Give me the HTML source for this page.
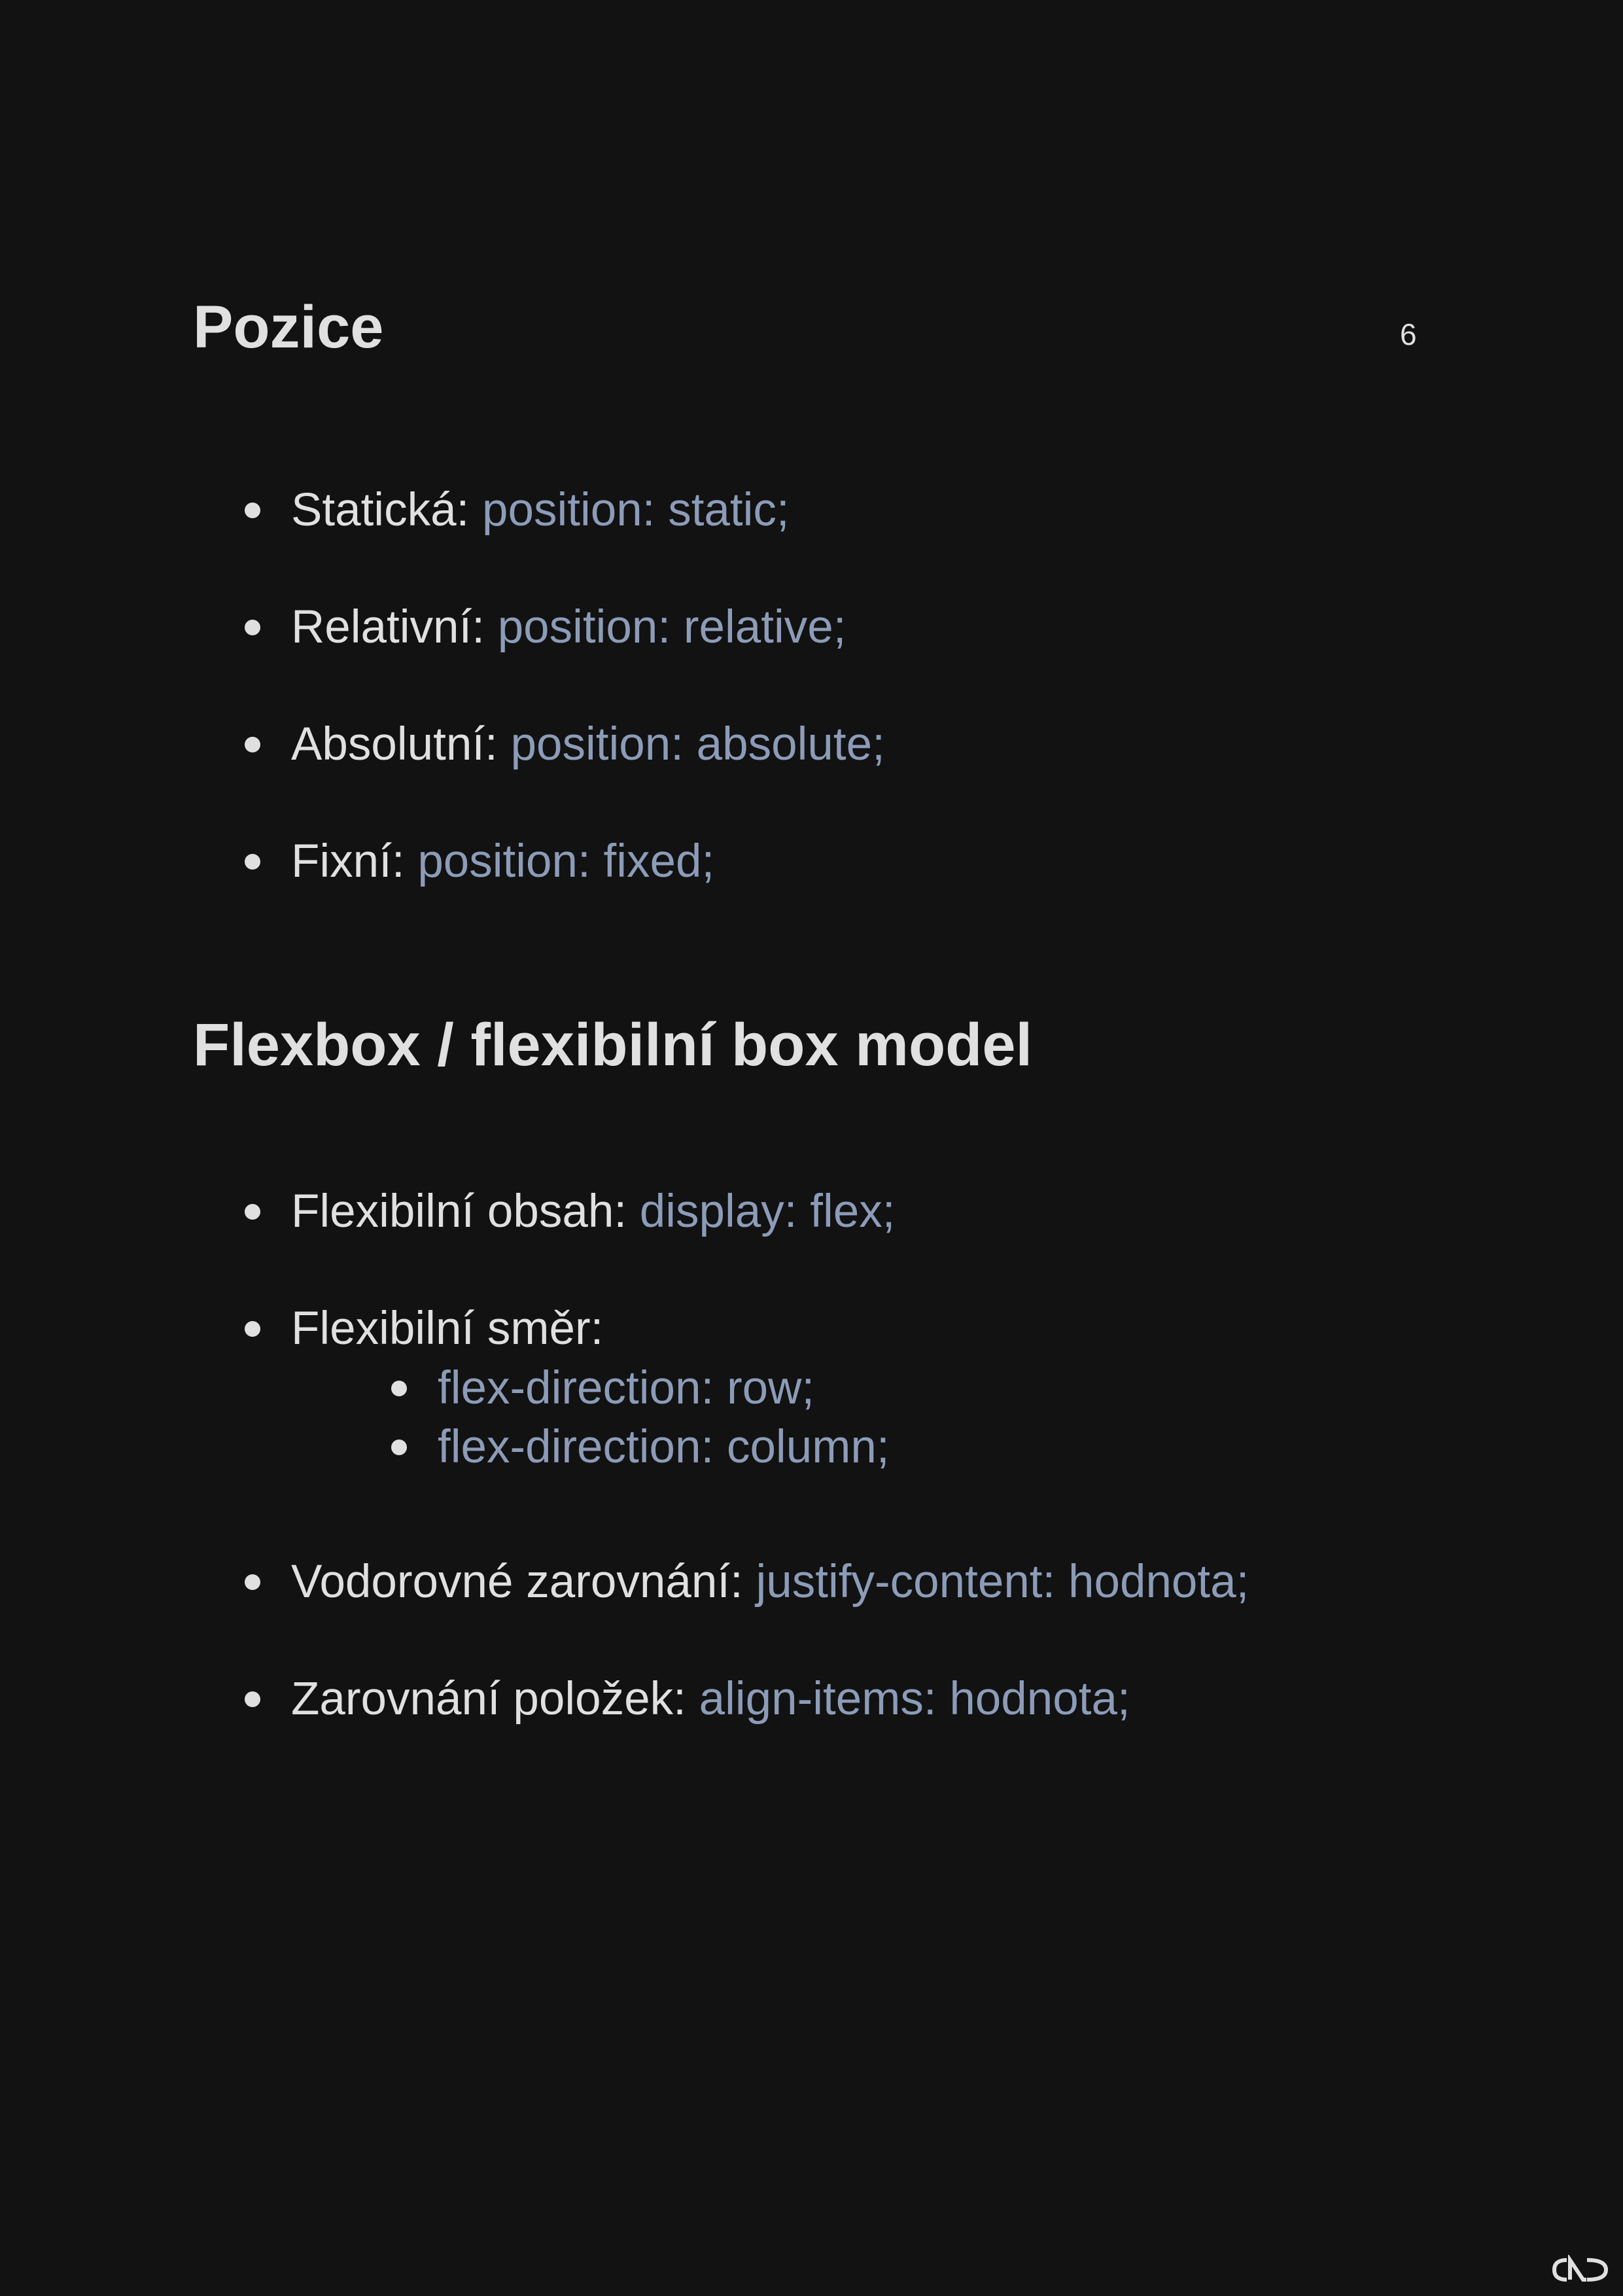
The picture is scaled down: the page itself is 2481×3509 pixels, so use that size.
<!DOCTYPE html>
<html><head><meta charset="utf-8"><style>
html,body{margin:0;padding:0;background:#121212;}
body{width:2481px;height:3509px;position:relative;overflow:hidden;font-family:"Liberation Sans",sans-serif;color:#e0e0e0;}
.l{position:absolute;white-space:nowrap;font-size:71px;line-height:70px;}
.h{position:absolute;white-space:nowrap;font-size:92px;line-height:90px;font-weight:bold;}
.c{color:#8c9cb8;}
.d{position:absolute;width:24px;height:24px;border-radius:50%;background:#e0e0e0;}
</style></head><body>
<div class="h" style="left:295px;top:455px">Pozice</div>
<div style="position:absolute;left:2140px;top:488px;font-size:46px;line-height:46px">6</div>

<div class="d" style="left:374px;top:768px"></div><div class="l" style="left:445px;top:745px">Statická: <span class="c">position: static;</span></div>
<div class="d" style="left:374px;top:947px"></div><div class="l" style="left:445px;top:924px">Relativní: <span class="c">position: relative;</span></div>
<div class="d" style="left:374px;top:1126px"></div><div class="l" style="left:445px;top:1103px">Absolutní: <span class="c">position: absolute;</span></div>
<div class="d" style="left:374px;top:1305px"></div><div class="l" style="left:445px;top:1282px">Fixní: <span class="c">position: fixed;</span></div>

<div class="h" style="left:295px;top:1552px">Flexbox / flexibilní box model</div>

<div class="d" style="left:374px;top:1840px"></div><div class="l" style="left:445px;top:1817px">Flexibilní obsah: <span class="c">display: flex;</span></div>
<div class="d" style="left:374px;top:2019px"></div><div class="l" style="left:445px;top:1996px">Flexibilní směr:</div>
<div class="d" style="left:598px;top:2110px"></div><div class="l c" style="left:669px;top:2087px">flex-direction: row;</div>
<div class="d" style="left:598px;top:2200px"></div><div class="l c" style="left:669px;top:2177px">flex-direction: column;</div>
<div class="d" style="left:374px;top:2406px"></div><div class="l" style="left:445px;top:2383px">Vodorovné zarovnání: <span class="c">justify-content: hodnota;</span></div>
<div class="d" style="left:374px;top:2585px"></div><div class="l" style="left:445px;top:2562px">Zarovnání položek: <span class="c">align-items: hodnota;</span></div>

<svg style="position:absolute;left:2366px;top:3446px" width="100" height="46" viewBox="0 0 100 46">
<g fill="none" stroke="#e0e0e0" stroke-width="6">
<path d="M29 8 Q10 8 10 23 Q10 38 29 38"/>
<path d="M34 38 L34 8 L54 38 L59 38"/>
<path d="M60 8 Q89 8 89 23 Q89 38 60 38"/>
</g></svg>
</body></html>
